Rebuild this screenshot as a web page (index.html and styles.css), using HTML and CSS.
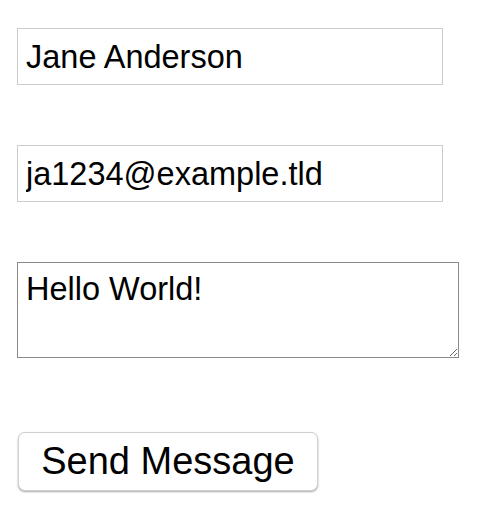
FILE: index.html
```html
<!DOCTYPE html>
<html>
<head>
<meta charset="utf-8">
<link rel="stylesheet" href="styles.css">
</head>
<body>
<form class="contact">
  <input class="field" type="text" value="Jane Anderson">
  <input class="field" type="email" value="ja1234@example.tld">
  <textarea class="message">Hello World!</textarea>
  <button class="send" type="button">Send Message</button>
</form>
</body>
</html>
```
FILE: styles.css
```css
html, body {
  margin: 0;
  background: #fff;
}
.contact {
  display: flex;
  flex-direction: column;
  align-items: flex-start;
  padding: 28px 17px;
  font-family: "Liberation Sans", Arial, sans-serif;
}
.field {
  box-sizing: border-box;
  width: 426px;
  height: 57px;
  margin: 0 0 60px 0;
  padding: 1px 8px 0 8px;
  border: 1px solid #cccccc;
  font-family: "Liberation Sans", Arial, sans-serif;
  font-size: 32.5px;
  color: #000;
  background: #fff;
  outline: none;
}
.message {
  box-sizing: border-box;
  width: 442px;
  height: 96px;
  margin: 0 0 74px 0;
  padding: 8px 8px;
  border: 1px solid #8a8a8a;
  font-family: "Liberation Sans", Arial, sans-serif;
  font-size: 32.5px;
  line-height: 1.15;
  color: #000;
  background: #fff;
  resize: both;
}
.send {
  box-sizing: border-box;
  width: 300px;
  height: 59px;
  margin-left: 1px;
  padding: 0;
  border: 1px solid #d0d0d0;
  border-radius: 7px;
  background: #fff;
  box-shadow: 0 1px 2px rgba(0,0,0,0.35);
  font-family: "Liberation Sans", Arial, sans-serif;
  font-size: 38px;
  color: #000;
}
```
